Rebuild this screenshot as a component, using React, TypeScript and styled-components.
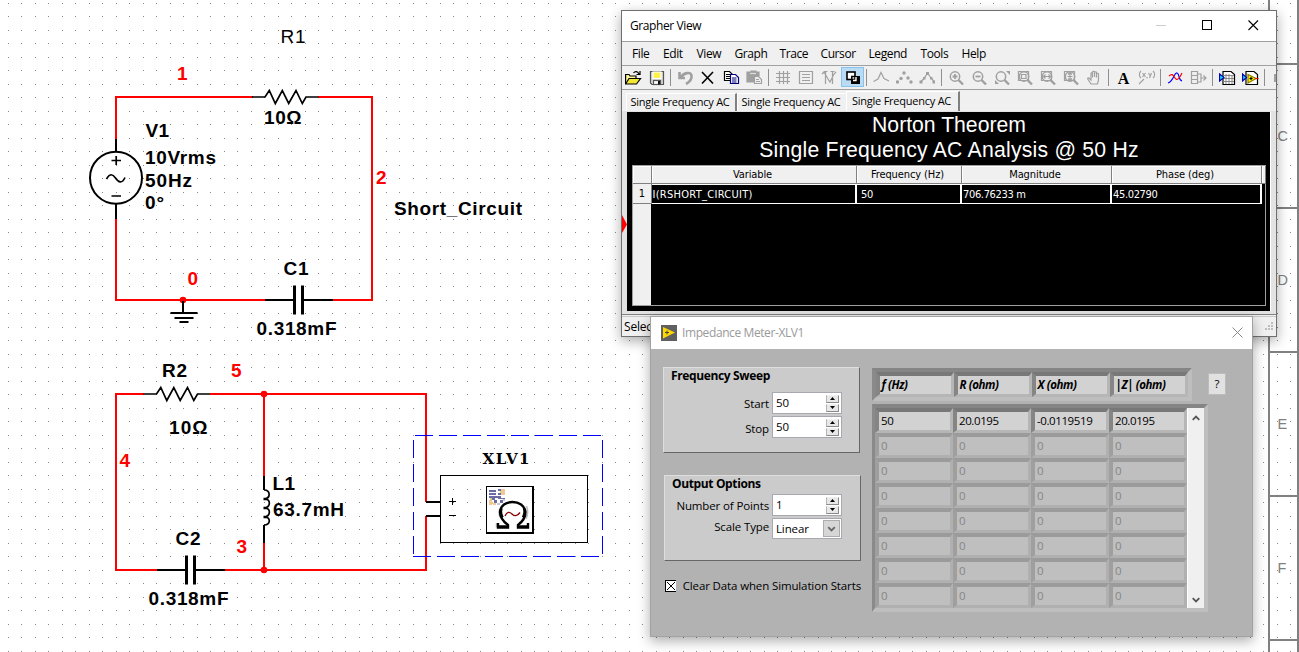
import React from "react";
import styled, { createGlobalStyle, css } from "styled-components";

const ui = `"Open Sans", "Noto Sans", sans-serif`;
const arial = `"Liberation Sans", Arial, sans-serif`;
const grid = `"DejaVu Sans Condensed", "DejaVu Sans", sans-serif`;

const Global = createGlobalStyle`
  * { box-sizing: border-box; }
  body { margin: 0; background: #fff; color: #000; font-family: ${ui}; font-size: 11.5px; }
`;

const Desktop = styled.main`
  position: relative;
  width: 1299px;
  height: 652px;
  overflow: hidden;
  background: #fff;
`;

const Sheet = styled.svg`
  display: block;
  width: 1299px;
  height: 652px;
`;

const Window = styled.section<{ $x: number; $y: number; $w: number; $h: number; $edge: string }>`
  position: absolute;
  left: ${(p) => p.$x}px;
  top: ${(p) => p.$y}px;
  width: ${(p) => p.$w}px;
  height: ${(p) => p.$h}px;
  border: 1px solid ${(p) => p.$edge};
  display: flex;
  flex-direction: column;
  background: #f0f0f0;
  box-shadow: 0 4px 12px rgba(0, 0, 0, 0.33);
`;

/* ---------- schematic ---------- */

const SheetText = styled.text<{ $red?: boolean; $thin?: boolean }>`
  font-family: ${arial};
  font-size: 19px;
  font-weight: ${(p) => (p.$thin ? 400 : 700)};
  fill: ${(p) => (p.$red ? "#f00" : "#000")};
`;

const ZoneText = styled.text`
  font-family: ${arial};
  font-size: 14.5px;
  fill: #808080;
`;

const MeterText = styled.text`
  font-family: "DejaVu Serif", serif;
  font-size: 15px;
  font-weight: 700;
`;

type Label = { t: string; x: number; y: number; len?: number; red?: boolean; thin?: boolean };

const labels: Label[] = [
  { t: "R1", x: 280.5, y: 43, len: 25, thin: true },
  { t: "1", x: 177, y: 80, red: true },
  { t: "10Ω", x: 264, y: 123.5, len: 37.5 },
  { t: "V1", x: 145.5, y: 137, len: 23.5 },
  { t: "10Vrms", x: 145, y: 164, len: 71 },
  { t: "50Hz", x: 145, y: 186.5, len: 47 },
  { t: "0°", x: 145, y: 208.5, len: 19 },
  { t: "2", x: 376, y: 184, red: true },
  { t: "Short_Circuit", x: 394, y: 215, len: 128 },
  { t: "0", x: 187.5, y: 285, red: true },
  { t: "C1", x: 283.5, y: 275, len: 25 },
  { t: "0.318mF", x: 256.5, y: 335, len: 80 },
  { t: "R2", x: 162, y: 377, len: 25 },
  { t: "5", x: 231, y: 377, red: true },
  { t: "10Ω", x: 169, y: 434, len: 38.5 },
  { t: "4", x: 119.5, y: 467, red: true },
  { t: "L1", x: 272.5, y: 489.5, len: 22.5 },
  { t: "63.7mH", x: 273, y: 516, len: 71 },
  { t: "C2", x: 175.5, y: 545, len: 25 },
  { t: "3", x: 236.5, y: 552.5, red: true },
  { t: "0.318mF", x: 148.5, y: 605, len: 80 },
];

const Resistor = ({ x, y }: { x: number; y: number }) => (
  <path
    transform={`translate(${x} ${y})`}
    d="M0 0H13L17.3-6.5L23.3 6.5L30.3-6.5L36.7 6.5L44-6.5L50.3 6.5L54 0H66.5"
    fill="none"
    stroke="#000"
    strokeWidth="1.7"
  />
);

const Capacitor = ({ x, y }: { x: number; y: number }) => (
  <g transform={`translate(${x} ${y})`} fill="#000">
    <rect x="0" y="-1" width="28" height="2" />
    <rect x="28" y="-14.5" width="3" height="29" />
    <rect x="36" y="-14.5" width="3" height="29" />
    <rect x="39" y="-1" width="29" height="2" />
  </g>
);

const Schematic = () => (
  <Sheet viewBox="0 0 1299 652">
    <defs>
      <pattern id="dots" width="27" height="27" patternUnits="userSpaceOnUse">
        <path d="M8 3h1v1h-1zM21 3h1v1h-1zM8 16h1v1h-1zM21 16h1v1h-1z" fill="#888" shapeRendering="crispEdges" />
      </pattern>
    </defs>
    <rect width="1299" height="652" fill="url(#dots)" />
    <g fill="#808080">
      <rect x="1268" y="0" width="2" height="652" />
      <rect x="1297" y="0" width="2" height="652" />
      {[63, 207, 351, 495, 639].map((y) => (
        <rect key={y} x="1268" y={y} width="31" height="2" />
      ))}
    </g>
    {["C", "D", "E", "F"].map((t, i) => (
      <ZoneText key={t} x="1277.5" y={141 + i * 144}>
        {t}
      </ZoneText>
    ))}
    <g fill="none" stroke="#f00" strokeWidth="2">
      <path d="M116 139V97H253M318 97H372V300H332M266 300H116V218" />
      <path d="M144 394H116V570H158M224 570H426V516M426 502V394H210M264 394V477M264 542V570" />
    </g>
    <g fill="#f00">
      <circle cx="183" cy="300" r="3.3" />
      <circle cx="264" cy="394" r="3.3" />
      <circle cx="264" cy="570" r="3.3" />
    </g>
    <Resistor x={252} y={97} />
    <Resistor x={143.5} y={394} />
    <Capacitor x={265} y={300} />
    <Capacitor x={157} y={570} />
    <g fill="none" stroke="#000" strokeWidth="2">
      <path d="M116 139V151M116 204V219" />
      <circle cx="116" cy="177.7" r="26" />
      <path d="M183 301V313M170.5 313H197.5M174.5 318H193.5M179.5 322H188.5" />
      <path d="M264 476V490M264 525V543M426 502H440M426 516H440" />
    </g>
    <g fill="none" stroke="#000" strokeWidth="1.7">
      <path d="M111.5 160.5H121M116.2 156V165M111.5 196H121" />
      <path d="M106.5 179C109.5 173.5 112.5 173.5 115.5 178S122 184 125 177.5" />
      <path d="M264 490C270.5 489.5 271 498 264.5 499C271 498.5 271 507 264.5 508C271 507.5 271 516 264.5 517C271 516.5 271 525 264 525" />
      <path d="M263.5 499H267M263.5 508H267M263.5 517H267" strokeWidth="2.4" />
    </g>
    <g fill="none" stroke="#00f" shapeRendering="crispEdges">
      <path d="M415 435.5H602.5" strokeDasharray="18 6" />
      <path d="M413 556.5H602.5" strokeDasharray="18 6" />
      <path d="M413.5 440V556M602.5 440V556" strokeDasharray="18 6" />
    </g>
    <g fill="none" stroke="#000">
      <rect x="440.5" y="475.5" width="147" height="67" />
      <path d="M449 501.5H456M452.5 498V505M449 515.5H456" />
    </g>
    <rect x="486" y="486" width="48" height="48" fill="#000" />
    <rect x="487" y="487" width="45" height="45" fill="#fff" />
    <g shapeRendering="crispEdges">
      <path
        d="M489 490h7v2h-7zM489 493h7v2h-7zM489 496h10v2h-10zM492 498h3v2h-3zM494 500h3v3h-3zM498 489h3v2h-3zM498 493h4v2h-4zM498 496h3v3h-3zM501 498h4v1h-4zM500 500h3v3h-3z"
        fill="#6b6ba8"
      />
      <path d="M501 489h4v6h-4zM489 500h3v5h-3zM493 503h3v2h-3z" fill="#f3c79a" />
      <path d="M500 491h2v2h-2zM490 498h2v2h-2zM491 502h2v2h-2z" fill="#d9d27c" />
      <path d="M503 499h2v2h-2zM497 503h3v2h-3z" fill="#c4c4dc" />
    </g>
    <path
      d="M496.5 523V527.500M500 517C498.500 513 499 509 501.500 506.500M521 521L518 525M526.500 506C528 510 528 515 526 519"
      fill="none"
      stroke="#bdbdbd"
      strokeWidth="1.500"
    />
    <path
      d="M498 523V527.5H508V525C502.500 521 500 516.500 500 512C500.500 505.500 506 502 512.500 502S524.500 505.500 525.500 512C525.500 516.500 523.500 521 518 525V527.5H528V523"
      fill="none"
      stroke="#000"
      strokeWidth="2.400"
    />
    <path d="M501.500 508C500.500 511 501 515 502.500 517.500M524 508C525 511 524.500 515 523 517.500M498 526.500H508M518 526.500H528" fill="none" stroke="#000" strokeWidth="2.600" />
    <path d="M505 516C507 511.5 509.5 511.5 512 514S517 516.5 520 512.5" fill="none" stroke="#8b0000" strokeWidth="1.3" />
    <MeterText x="482.5" y="464" textLength="47">
      XLV1
    </MeterText>
    {labels.map((l) => (
      <SheetText key={`${l.t}-${l.x}`} x={l.x} y={l.y} textLength={l.len} $red={l.red} $thin={l.thin}>
        {l.t}
      </SheetText>
    ))}
  </Sheet>
);

/* ---------- Grapher window ---------- */

const TitleBar = styled.header<{ $h: number; $muted?: boolean }>`
  flex: 0 0 ${(p) => p.$h}px;
  display: flex;
  align-items: center;
  background: #fff;
  color: ${(p) => (p.$muted ? "#9a9a9a" : "#000")};
  padding: 0 ${(p) => (p.$muted ? 9 : 17)}px 0 ${(p) => (p.$muted ? 10 : 8)}px;
`;

const Title = styled.h1<{ $gap?: number }>`
  flex: 1;
  margin: 0 0 0 ${(p) => p.$gap ?? 0}px;
  font-size: 12px;
  font-weight: 400;
  line-height: 16px;
  letter-spacing: -0.4px;
`;

const Controls = styled.div`
  display: flex;
  gap: 35px;
  margin-bottom: 2px;
`;

const MenuBar = styled.nav`
  flex: 0 0 25px;
  display: flex;
  align-items: center;
  padding-left: 10px;
  border-top: 1px solid #a0a0a0;
  border-bottom: 1px solid #a0a0a0;
  font-size: 12px;
  letter-spacing: -0.4px;
`;

const MenuItem = styled.span<{ $w: number }>`
  flex: 0 0 ${(p) => p.$w}px;
  white-space: nowrap;
`;

const ToolBar = styled.div`
  flex: 0 0 24px;
  display: flex;
  align-items: flex-start;
  overflow: hidden;
  padding-top: 1px;
  border-bottom: 1px solid #a0a0a0;
`;

const Tool = styled.span<{ $on?: boolean }>`
  flex: 0 0 23px;
  height: 20px;
  padding: 3px 0 0 3px;
  ${(p) =>
    p.$on &&
    css`
      background: #b9dcf4;
      box-shadow: inset 0 0 0 1px #86c3ee;
    `}
  svg {
    display: block;
  }
`;

const Divider = styled.span`
  flex: 0 0 6px;
  height: 18px;
  margin-top: 2px;
  background: linear-gradient(#8f8f8f, #8f8f8f) 2px 0 / 1px 17px no-repeat;
`;

const Tabs = styled.div`
  flex: 0 0 21px;
  display: flex;
  align-items: flex-end;
  padding-left: 4px;
`;

const Tab = styled.span<{ $active?: boolean; $edge?: boolean; $w: number }>`
  width: ${(p) => p.$w}px;
  height: ${(p) => (p.$active ? 20 : 18)}px;
  padding-left: ${(p) => (p.$active ? 5 : 3.5)}px;
  line-height: ${(p) => (p.$active ? 18 : 16)}px;
  font-size: 11px;
  letter-spacing: -0.24px;
  white-space: nowrap;
  border-top: 1px solid #fff;
  border-left: 1px solid #fff;
  border-right: 2px solid ${(p) => (p.$edge ? "#808080" : "transparent")};
`;

const Plot = styled.div`
  position: relative;
  flex: 0 0 203px;
  border: solid #e3e3e3;
  border-width: 1px 5px 3px 5px;
  box-shadow: inset -1px 0 0 #fff, 0 1px 0 #808080;
  background: #000;
  padding: 0 5px 0 5px;
  display: flex;
  flex-direction: column;
`;

const Marker = styled.svg`
  position: absolute;
  left: -5px;
  top: 103px;
`;

const Heading = styled.div`
  flex: 0 0 53px;
  color: #fff;
  text-align: center;
  font-family: ${arial};
  font-size: 21.2px;
  line-height: 25px;
`;

const Subheading = styled.div`
  letter-spacing: 0.23px;
`;

const Results = styled.div`
  flex: 0 0 141px;
  border: 1px solid #a0a0a0;
  background: linear-gradient(#f0f0f0, #f0f0f0) 0 0 / 18px 100% no-repeat;
  font-family: ${grid};
  font-stretch: condensed;
  font-size: 11px;
`;

const ResultRow = styled.div`
  display: grid;
  grid-template-columns: 19px 205px 105px 150px 150px 1fr;
`;

const HeadCell = styled.div`
  height: 18px;
  line-height: 17px;
  padding-right: 3px;
  text-align: center;
  background: #f0f0f0;
  border: solid #808080;
  border-width: 0 1px 1px 0;
  box-shadow: inset 1px 1px 0 #fff;
  letter-spacing: -0.1px;
`;

const DataCell = styled.div<{ $pad?: number; $track?: number }>`
  height: 20px;
  line-height: 19px;
  padding-left: ${(p) => p.$pad ?? 1}px;
  color: #fff;
  border: solid #fff;
  border-width: 1px 2px 1px 0;
  letter-spacing: ${(p) => p.$track ?? -0.35}px;
  white-space: nowrap;
`;

const RowNumber = styled.div`
  height: 20px;
  line-height: 20px;
  text-align: center;
  background: #f0f0f0;
  border: solid #808080;
  border-width: 0 1px 1px 0;
`;

const StatusBar = styled.footer`
  flex: 1;
  margin-top: 2px;
  display: flex;
  justify-content: space-between;
  align-items: center;
  padding: 0 2px 0 2px;
  border-top: 1px solid #c8c8c8;
  font-size: 12px;
  letter-spacing: -0.2px;
`;

const G = "#a0a0a0";

const Icon = ({ children }: { children: React.ReactNode }) => (
  <svg width="18" height="16" viewBox="0 0 18 16" fill="none" stroke={G} strokeWidth="1.2">
    {children}
  </svg>
);

const Lens = ({ children, rect }: { children?: React.ReactNode; rect?: boolean }) => (
  <Icon>
    <circle cx="7" cy="6.5" r="4.7" strokeWidth="1.5" />
    <path d="M10.5 10L15 14.5" strokeWidth="2.4" />
    {rect && <path d="M1.5 1.5H11.5V10.5H1.5Z" />}
    {children}
  </Icon>
);

const icons: Record<string, React.ReactNode> = {
  open: (
    <Icon>
      <path d="M.6 14V4.500H4L5 6H11V8.500" stroke="#000" fill="#fff79a" />
      <path d="M.6 14L4 8.500H15.500L11.500 14Z" stroke="#000" fill="#f2e637" />
      <path d="M8.500 3C10 1 12.500 1 14 4M15 1V4.500H11.500" stroke="#000" />
    </Icon>
  ),
  save: (
    <Icon>
      <path d="M2.5 1.5H15.5V14.5H4L2.5 13Z" stroke="#555" fill="#d8d8d8" />
      <rect x="5" y="2" width="8" height="6.5" fill="#fff04a" stroke="#fff" />
      <rect x="5.5" y="10.5" width="7" height="4" fill="#fff" stroke="#555" />
      <rect x="10" y="11" width="2" height="3.5" fill="#111" stroke="none" />
    </Icon>
  ),
  undo: (
    <Icon>
      <path d="M2.500 2V8H8M3.500 7.500C7 2.500 13.500 1.500 14.500 5.500C15 9 12.500 12 9 14" strokeWidth="2.6" />
    </Icon>
  ),
  cut: (
    <Icon>
      <path d="M2 2L13 13.5M13 2L2 13.5" stroke="#000" strokeWidth="1.6" />
    </Icon>
  ),
  copy: (
    <Icon>
      <path d="M1.5 1.5H6.5L9.5 4.5V10.5H1.5Z" stroke="#000" fill="#fff" />
      <path d="M3 4.5H7M3 6.5H7M3 8.5H7" stroke="#000" />
      <path d="M7.5 4.5H12.5L15.5 7.5V13.5H7.5Z" stroke="#00007c" fill="#fff" />
      <path d="M9 8H13.5M9 10H13.5M9 12H13.5" stroke="#00007c" />
    </Icon>
  ),
  paste: (
    <Icon>
      <path d="M1 2H5V1H10V2H13V6H8V12H1Z" fill={G} stroke={G} />
      <path d="M8.5 6.5H12.5L15.5 9.5V13.5H8.5Z" fill="#f0f0f0" />
      <path d="M10 9.5H13M10 11.5H14" />
      <path d="M4 3.500H10" stroke="#ddd" />
    </Icon>
  ),
  grid: (
    <Icon>
      <path d="M4.5 1V14M8.5 1V14M12.5 1V14M1 3.5H15M1 7.5H15M1 11.5H15" />
    </Icon>
  ),
  legend: (
    <Icon>
      <path d="M1.5 1.5H14.5V13.5H1.5ZM4 4.5H12M4 7.5H12M4 10.5H12" />
    </Icon>
  ),
  cursor: (
    <Icon>
      <path d="M4.5 1V14M11.5 1V14M1 4L3 2L7 9L9 12L13 4L15 2M2.5 1.5H6.5M9.500 1.5H13.5" />
    </Icon>
  ),
  invert: (
    <Icon>
      <rect x="7" y="6" width="9" height="8" fill="#000" stroke="none" />
      <rect x="3" y="2" width="8" height="7.500" fill="#fff" stroke="#000" strokeWidth="1.600" />
      <path d="M7.800 9.500V6.500H11" stroke="#000" strokeWidth="1.500" />
      <path d="M9 10.500H12V7" stroke="#fff" strokeWidth="1.400" />
    </Icon>
  ),
  line: (
    <Icon>
      <path d="M0.5 11.5L5 9L8 2.5L11 8.5L16 11" />
    </Icon>
  ),
  points: (
    <Icon>
      <g fill={G} stroke="none">
        <circle cx="1.500" cy="12" r="1.7" />
        <circle cx="5" cy="8.500" r="1.7" />
        <circle cx="8" cy="3" r="1.7" />
        <circle cx="12" cy="8" r="1.7" />
        <circle cx="15" cy="12" r="1.7" />
      </g>
    </Icon>
  ),
  both: (
    <Icon>
      <path d="M1.5 12L5 8.500L8.5 3L12 8L15.5 12" />
      <path d="M0.5 10.500H3.5V13.500H0.5ZM4 7H6.5V9.5H4ZM7 2H10V5H7ZM11 7H13.5V9.5H11ZM13.5 10.500H16V13.500H13.5Z" fill={G} stroke="none" />
    </Icon>
  ),
  zin: (
    <Lens>
      <path d="M4.5 6.5H9.5M7 4V9" strokeWidth="1.8" />
    </Lens>
  ),
  zout: (
    <Lens>
      <path d="M4.5 6.5H9.5" strokeWidth="1.8" />
    </Lens>
  ),
  zfit: (
    <Lens>
      <path d="M12 1H16V5ZM1 10V14H5Z" fill={G} stroke="none" />
    </Lens>
  ),
  zrect: (
    <Lens rect>
      <path d="M4.5 4.5H9V8.5H4.5Z" />
    </Lens>
  ),
  zh: (
    <Lens rect>
      <path d="M3.5 6.5H10.5M5.5 4.5L3.5 6.5L5.5 8.5M8.5 4.5L10.5 6.5L8.5 8.5" />
    </Lens>
  ),
  zv: (
    <Lens rect>
      <path d="M7 3V10M5 4.5L7 2.5L9 4.5M5 8.5L7 10.5L9 8.5M4.5 6.5H9.5" />
    </Lens>
  ),
  hand: (
    <Icon>
      <path d="M5 14L2 9.5C1 8 2.5 7.5 3.5 8.5L5 10V3.5C5 2.5 6.5 2.5 6.5 3.5V7.5V2C6.5 1 8.5 1 8.5 2V7V2.5C8.5 1.5 10.5 1.5 10.5 2.5V7.5V4C10.5 3 12.5 3 12.5 4V10L11.5 14Z" />
    </Icon>
  ),
  coord: (
    <Icon>
      <path d="M3 1C0.8 3 0.8 6 3 8M4.5 3L7.5 7M7.5 3L4.5 7M9 7V8.5M10.5 3L12 5.5M13.5 3L11.5 8M15 1C17.2 3 17.2 6 15 8M1 14L6 9" strokeWidth="1.1" />
    </Icon>
  ),
  overlay: (
    <Icon>
      <path d="M1 13C7 11 7 2 10 3S11 10 15 11" stroke="#00f" />
      <path d="M2 6C5 3 6 5 8 8S12 9 15 3" stroke="#f00" />
    </Icon>
  ),
  move: (
    <Icon>
      <path d="M1.5 1.5H7.5V13.5H1.5ZM2 5.5H7M2 9.5H7M8 4H11V12H8M11 8H16M13.5 5.5L16 8L13.5 10.5" />
    </Icon>
  ),
  excel: (
    <Icon>
      <path d="M4 1.5H12L15.5 4.5V14.5H4Z" stroke="#000" fill="#fff" />
      <path d="M7 4V14M10 4V14M13 5V14M4.500 5.500H15M4.500 8.500H15M4.500 11.500H15" stroke="#888" strokeWidth="1" />
      <path d="M0.600 4V11L5 7.5Z" stroke="#0000b0" fill="#1ee" />
    </Icon>
  ),
  labview: (
    <Icon>
      <path d="M4 1.5H12L15.5 4.5V14.5H4Z" stroke="#000" fill="#fff" />
      <path d="M0.600 4V11L4.500 7.5Z" stroke="#0000b0" fill="#1ee" />
      <path d="M6 4.500V13L14 8.5Z" stroke="#8a7a00" fill="#fff200" />
      <path d="M7.500 8.500H10.500M9 7V10" stroke="#000" />
      <path d="M13.500 8.5H16.500" stroke="#e00" />
    </Icon>
  ),
  more: (
    <Icon>
      <path d="M3 4H9V12H3Z" fill={G} stroke="none" />
    </Icon>
  ),
};

const TextToolGlyph = styled.b`
  display: block;
  width: 17px;
  text-align: center;
  font: 700 16px/17px "Liberation Serif", serif;
`;

const toolGroups = [
  ["open", "save"],
  ["undo", "cut", "copy", "paste"],
  ["grid", "legend", "cursor", "invert"],
  ["line", "points", "both"],
  ["zin", "zout", "zfit", "zrect", "zh", "zv", "hand"],
  ["text", "coord"],
  ["overlay", "move"],
  ["excel", "labview"],
  ["more"],
];

const menus: [string, number][] = [
  ["File", 31],
  ["Edit", 33.5],
  ["View", 38],
  ["Graph", 45],
  ["Trace", 41],
  ["Cursor", 48],
  ["Legend", 52],
  ["Tools", 41],
  ["Help", 30],
];

const Grapher = () => (
  <Window $x={621} $y={10} $w={656} $h={327} $edge="#6f6f6f">
    <TitleBar $h={30}>
      <Title>Grapher View</Title>
      <Controls>
        <svg width="11" height="11">
          <path d="M0 5.5H10" stroke="#ccc" />
        </svg>
        <svg width="11" height="11">
          <rect x=".5" y=".5" width="9" height="9" fill="none" stroke="#000" />
        </svg>
        <svg width="11" height="11">
          <path d="M.5.5L10 10M10 .5L.5 10" stroke="#000" strokeWidth="1.1" />
        </svg>
      </Controls>
    </TitleBar>
    <MenuBar>
      {menus.map(([m, w]) => (
        <MenuItem key={m} $w={w}>
          {m}
        </MenuItem>
      ))}
    </MenuBar>
    <ToolBar>
      {toolGroups.map((group, i) => (
        <React.Fragment key={i}>
          {i > 0 && <Divider />}
          {group.map((name) => (
            <Tool key={name} $on={name === "invert"}>
              {name === "text" ? <TextToolGlyph>A</TextToolGlyph> : icons[name]}
            </Tool>
          ))}
        </React.Fragment>
      ))}
    </ToolBar>
    <Tabs>
      <Tab $w={111} $edge>
        Single Frequency AC
      </Tab>
      <Tab $w={109}>Single Frequency AC</Tab>
      <Tab $w={114} $active $edge>
        Single Frequency AC
      </Tab>
    </Tabs>
    <Plot>
      <Marker width="6" height="19">
        <path d="M0 0L5 9.5L0 18Z" fill="#f00" />
      </Marker>
      <Heading>
        Norton Theorem
        <Subheading>Single Frequency AC Analysis @ 50 Hz</Subheading>
      </Heading>
      <Results>
        <ResultRow>
          <HeadCell />
          <HeadCell>Variable</HeadCell>
          <HeadCell>Frequency (Hz)</HeadCell>
          <HeadCell>Magnitude</HeadCell>
          <HeadCell>Phase (deg)</HeadCell>
          <HeadCell />
        </ResultRow>
        <ResultRow>
          <RowNumber>1</RowNumber>
          <DataCell $pad={0.5} $track={0.28}>
            I(RSHORT_CIRCUIT)
          </DataCell>
          <DataCell $pad={4}>50</DataCell>
          <DataCell>706.76233 m</DataCell>
          <DataCell>45.02790</DataCell>
        </ResultRow>
      </Results>
    </Plot>
    <StatusBar>
      <span>Selec</span>
      <svg width="9" height="9" fill="#bdbdbd">
        <path d="M6 0h2v2h-2zM3 3h2v2h-2zM6 3h2v2h-2zM0 6h2v2h-2zM3 6h2v2h-2zM6 6h2v2h-2z" />
      </svg>
    </StatusBar>
  </Window>
);

/* ---------- Impedance meter ---------- */

const MeterBody = styled.div`
  flex: 1;
  display: flex;
  gap: 11px;
  padding: 18px 0 0 12px;
  background: #b2b2b2;
  letter-spacing: -0.13px;
`;

const Settings = styled.div`
  flex: 0 0 198px;
  min-width: 0;
  width: 198px;
`;

const Group = styled.fieldset<{ $shift?: boolean }>`
  width: 197px;
  height: 86px;
  margin: ${(p) => (p.$shift ? "22px 0 0 1px" : "0")};
  padding: 0 ${(p) => (p.$shift ? 18 : 17)}px 0 7px;
  border: 1px solid;
  border-color: #dedede #666 #666 #dedede;
  background: #cbcbcb;
`;

const GroupTitle = styled.h2<{ $gap: number }>`
  margin: 0 0 ${(p) => p.$gap}px;
  font-size: 12px;
  line-height: 16px;
  font-weight: 700;
  letter-spacing: -0.36px;
`;

const Field = styled.label<{ $lift?: number }>`
  display: flex;
  justify-content: flex-end;
  align-items: center;
  gap: 3px;
  margin-bottom: 2px;
  white-space: nowrap;
  > span {
    padding-top: ${(p) => Math.max(0, p.$lift ?? 0)}px;
    padding-bottom: ${(p) => Math.max(0, -(p.$lift ?? 0))}px;
  }
`;

const Input = styled.div<{ $h?: number }>`
  flex: 0 0 70px;
  height: ${(p) => p.$h ?? 22}px;
  display: flex;
  justify-content: space-between;
  align-items: center;
  padding: 0 2px 0 3px;
  border: 1px solid #a8a8b0;
  background: #fff;
  line-height: 18px;
`;

const Spinner = styled.div`
  display: grid;
  gap: 1px;
`;

const Arrow = styled.span<{ $down?: boolean }>`
  display: flex;
  width: 13px;
  height: 8px;
  align-items: center;
  justify-content: center;
  background: #e8e8e8;
  border: 1px solid;
  border-color: #f0f0f0 #8a8a8a #8a8a8a #b5b5b5;
  svg {
    transform: ${(p) => (p.$down ? "rotate(180deg)" : "none")};
  }
`;

const DropButton = styled.span`
  display: flex;
  width: 17px;
  height: 17px;
  margin-right: -1px;
  align-items: center;
  justify-content: center;
  background: #d6d6d6;
  border: 1px solid #acacac;
`;

const CheckRow = styled.label`
  display: flex;
  align-items: center;
  gap: 7px;
  height: 12px;
  margin: 19px 0 0 2px;
  line-height: 12px;
  white-space: nowrap;
`;

const Readings = styled.div`
  padding-top: 1px;
`;

const HeadLine = styled.div`
  display: flex;
  gap: 16px;
  margin-bottom: 3px;
`;

const Frame = styled.div<{ $left: number }>`
  display: flex;
  width: max-content;
  border: solid;
  border-width: 4px 4px 4px ${(p) => p.$left}px;
  border-color: #858585 #bebebe #bebebe #8a8a8a;
`;

const CellGrid = styled.div`
  display: grid;
  grid-template-columns: repeat(4, 78px);
`;

const Cell = styled.div<{ $kind: "head" | "value" | "empty" }>`
  height: 25px;
  padding-left: ${(p) => (p.$kind === "head" ? 1.5 : 2)}px;
  border: solid;
  border-width: 4px 3px 3px 4px;
  border-color: ${(p) => (p.$kind === "empty" ? "#9b9b9b #b0b0b0 #b0b0b0 #9f9f9f" : "#787878 #b6b6b6 #b6b6b6 #858585")};
  background: ${(p) => (p.$kind === "empty" ? "#bfbfbf" : "#d2d2d2")};
  color: ${(p) => (p.$kind === "empty" ? "#868686" : "#000")};
  font-weight: ${(p) => (p.$kind === "head" ? 700 : 400)};
  font-style: ${(p) => (p.$kind === "head" ? "italic" : "normal")};
  letter-spacing: -0.4px;
  line-height: 18px;
`;

const HelpButton = styled.span`
  width: 18px;
  height: 22px;
  margin-top: 5px;
  line-height: 20px;
  text-align: center;
  background: #e1e1e1;
  border: 1px solid #bcbcbc;
`;

const ScrollBar = styled.div`
  width: 17px;
  display: flex;
  flex-direction: column;
  justify-content: space-between;
  align-items: center;
  padding: 7px 0 5px;
  background: #f0f0f0;
  border-left: 1px solid #fff;
`;

const Chevron = ({ flip, w = 8, color = "#555" }: { flip?: boolean; w?: number; color?: string }) => (
  <svg width={w} height="6" viewBox="0 0 8 6" transform={flip ? "rotate(180)" : undefined}>
    <path d="M0.7 4.8L4 1.5L7.3 4.8" fill="none" stroke={color} strokeWidth="1.8" />
  </svg>
);

const Triangle = () => (
  <svg width="5" height="3">
    <path d="M2.5 0L5 3H0Z" />
  </svg>
);

const NumberField = ({ name, value, lift }: { name: string; value: string; lift?: number }) => (
  <Field $lift={lift}>
    <span>{name}</span>
    <Input>
      {value}
      <Spinner>
        <Arrow>
          <Triangle />
        </Arrow>
        <Arrow $down>
          <Triangle />
        </Arrow>
      </Spinner>
    </Input>
  </Field>
);

const ImpedanceMeter = () => (
  <Window $x={650} $y={316} $w={603} $h={321} $edge="#a2a2a2">
    <TitleBar $h={32} $muted>
      <svg width="16" height="16">
        <rect width="16" height="16" fill="#606060" />
        <path d="M2 2L14 7.5L2 13.5Z" fill="#ffd800" />
        <path d="M4 7.5H8M6 5.5V9.5" stroke="#444" />
      </svg>
      <Title $gap={5}>Impedance Meter-XLV1</Title>
      <svg width="11" height="13">
        <path d="M.5.5L10.5 10.5M10.5 .5L.5 10.5" stroke="#888" />
      </svg>
    </TitleBar>
    <MeterBody>
      <Settings>
        <Group>
          <GroupTitle $gap={8}>Frequency Sweep</GroupTitle>
          <NumberField name="Start" value="50" />
          <NumberField name="Stop" value="50" lift={2} />
        </Group>
        <Group $shift>
          <GroupTitle $gap={2}>Output Options</GroupTitle>
          <NumberField name="Number of Points" value="1" />
          <Field $lift={-4}>
            <span>Scale Type</span>
            <Input $h={21}>
              Linear
              <DropButton>
                <Chevron flip w={9} color="#666" />
              </DropButton>
            </Input>
          </Field>
        </Group>
        <CheckRow>
          <svg width="12" height="12">
            <rect x=".5" y=".5" width="11" height="11" fill="#fff" stroke="#000" />
            <path d="M2 2L10 10M10 2L2 10" stroke="#000" />
          </svg>
          Clear Data when Simulation Starts
        </CheckRow>
      </Settings>
      <Readings>
        <HeadLine>
          <Frame $left={4}>
            <CellGrid>
              {["f (Hz)", "R (ohm)", "X (ohm)", "|Z| (ohm)"].map((t) => (
                <Cell key={t} $kind="head">
                  {t}
                </Cell>
              ))}
            </CellGrid>
          </Frame>
          <HelpButton>?</HelpButton>
        </HeadLine>
        <Frame $left={3}>
          <CellGrid>
            {["50", "20.0195", "-0.0119519", "20.0195"].map((t, i) => (
              <Cell key={i} $kind="value">
                {t}
              </Cell>
            ))}
            {Array.from({ length: 28 }, (_, i) => (
              <Cell key={i} $kind="empty">
                0
              </Cell>
            ))}
          </CellGrid>
          <ScrollBar>
            <Chevron />
            <Chevron flip />
          </ScrollBar>
        </Frame>
      </Readings>
    </MeterBody>
  </Window>
);

export default function App() {
  return (
    <Desktop>
      <Global />
      <Schematic />
      <Grapher />
      <ImpedanceMeter />
    </Desktop>
  );
}
